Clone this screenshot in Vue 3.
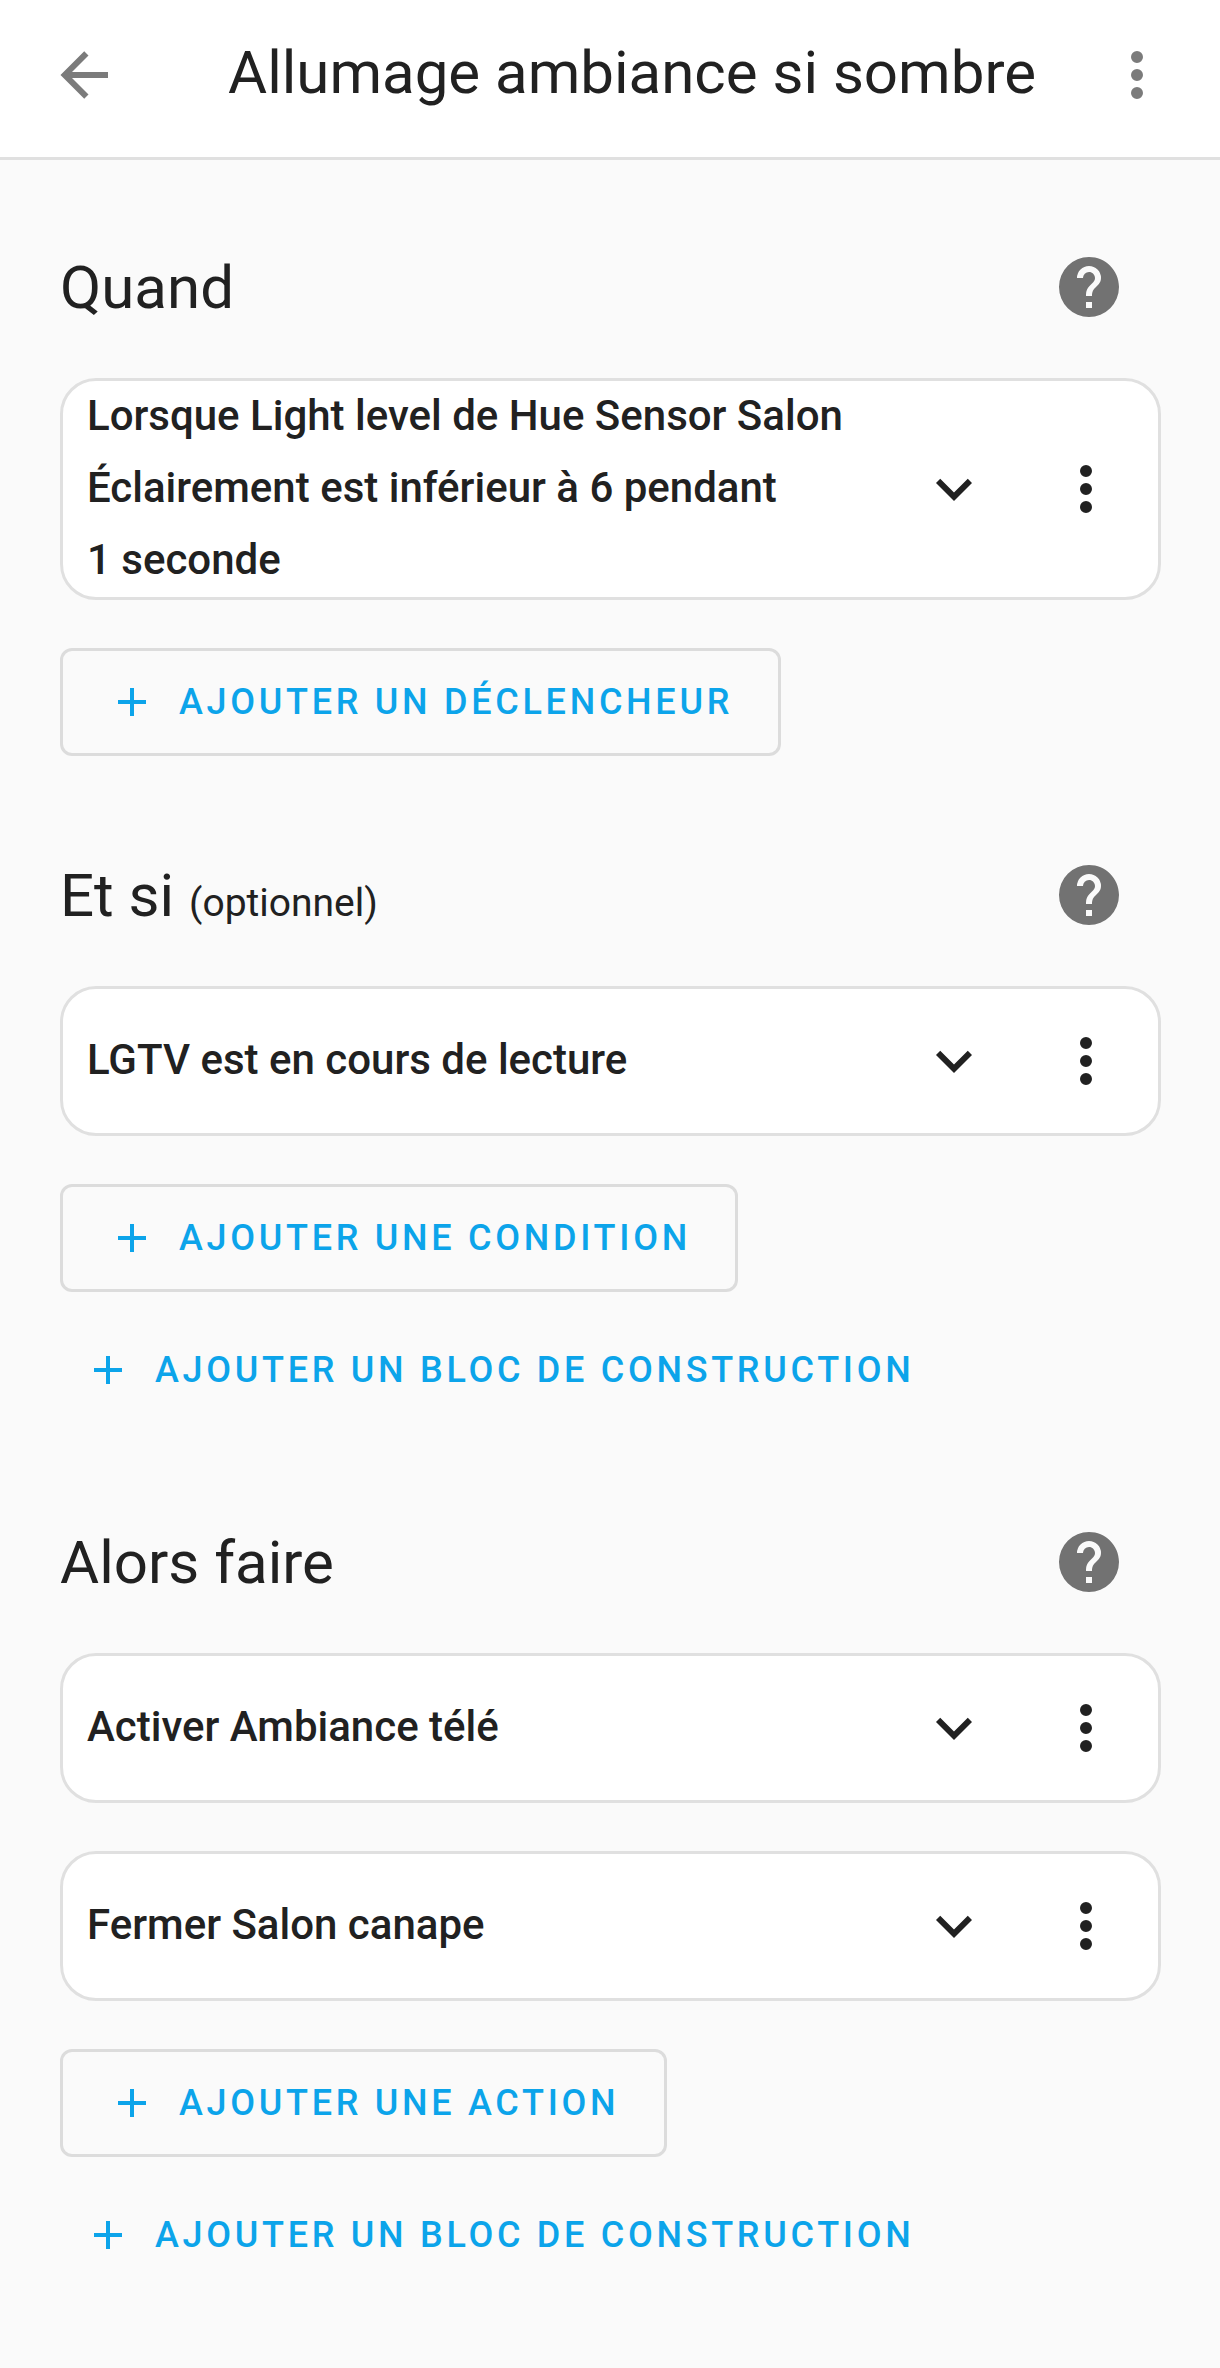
<script setup>
const icons = {
  arrowLeft: 'M20,11V13H8L13.5,18.5L12.08,19.92L4.16,12L12.08,4.08L13.5,5.5L8,11H20Z',
  dots: 'M12,16A2,2 0 0,1 14,18A2,2 0 0,1 12,20A2,2 0 0,1 10,18A2,2 0 0,1 12,16M12,10A2,2 0 0,1 14,12A2,2 0 0,1 12,14A2,2 0 0,1 10,12A2,2 0 0,1 12,10M12,4A2,2 0 0,1 14,6A2,2 0 0,1 12,8A2,2 0 0,1 10,6A2,2 0 0,1 12,4Z',
  chevron: 'M7.41,8.58L12,13.17L16.59,8.58L18,10L12,16L6,10L7.41,8.58Z',
  plus: 'M19,13H13V19H11V13H5V11H11V5H13V11H19V13Z',
  help: 'M15.07,11.25L14.17,12.17C13.45,12.89 13,13.5 13,15H11V14.5C11,13.39 11.45,12.39 12.17,11.67L13.41,10.41C13.78,10.05 14,9.55 14,9C14,7.89 13.1,7 12,7A2,2 0 0,0 10,9H8A4,4 0 0,1 12,5A4,4 0 0,1 16,9C16,9.88 15.64,10.67 15.07,11.25M13,19H11V17H13M12,2A10,10 0 0,0 2,12A10,10 0 0,0 12,22A10,10 0 0,0 22,12C22,6.47 17.5,2 12,2Z',
};

const sections = [
  {
    title: 'Quand',
    rows: ['Lorsque Light level de Hue Sensor Salon Éclairement est inférieur à 6 pendant 1\u00a0seconde'],
    add: 'Ajouter un déclencheur',
  },
  {
    title: 'Et si',
    hint: '(optionnel)',
    rows: ['LGTV est en cours de lecture'],
    add: 'Ajouter une condition',
    block: 'Ajouter un bloc de construction',
  },
  {
    title: 'Alors faire',
    rows: ['Activer Ambiance télé', 'Fermer Salon canape'],
    add: 'Ajouter une action',
    block: 'Ajouter un bloc de construction',
  },
];
</script>

<template>
  <div class="editor">
    <header class="toolbar">
      <button class="icon-button" aria-label="Retour">
        <svg viewBox="0 0 24 24"><path :d="icons.arrowLeft" /></svg>
      </button>
      <h1 class="toolbar__title">Allumage ambiance si sombre</h1>
      <button class="icon-button" aria-label="Menu">
        <svg viewBox="0 0 24 24"><path :d="icons.dots" /></svg>
      </button>
    </header>

    <main class="content">
      <section v-for="section in sections" :key="section.title" class="section">
        <div class="section__header">
          <h2 class="section__title">
            {{ section.title }}
            <span v-if="section.hint" class="section__hint">{{ section.hint }}</span>
          </h2>
          <button class="icon-button icon-button--help" aria-label="Aide">
            <svg viewBox="0 0 24 24"><path :d="icons.help" /></svg>
          </button>
        </div>

        <div class="rows">
          <article v-for="row in section.rows" :key="row" class="card">
            <h3 class="card__title">{{ row }}</h3>
            <svg class="card__chevron" viewBox="0 0 24 24"><path :d="icons.chevron" /></svg>
            <button class="icon-button icon-button--dark" aria-label="Menu">
              <svg viewBox="0 0 24 24"><path :d="icons.dots" /></svg>
            </button>
          </article>
        </div>

        <div class="actions">
          <button class="button button--outlined">
            <svg viewBox="0 0 24 24"><path :d="icons.plus" /></svg>
            <span>{{ section.add }}</span>
          </button>
          <button v-if="section.block" class="button">
            <svg viewBox="0 0 24 24"><path :d="icons.plus" /></svg>
            <span>{{ section.block }}</span>
          </button>
        </div>
      </section>
    </main>
  </div>
</template>

<style>
body {
  margin: 0;
  background: #fafafa;
}
</style>

<style scoped>
.editor {
  box-sizing: border-box;
  min-height: 2368px;
  background: #fafafa;
  color: #212121;
  font-family: Roboto, 'Liberation Sans', sans-serif;
}

h1,
h2,
h3 {
  margin: 0;
  font-weight: 400;
}

button {
  margin: 0;
  padding: 0;
  border: 0;
  background: none;
  font-family: inherit;
}

svg {
  display: block;
  flex: none;
  fill: currentColor;
}

.toolbar {
  display: flex;
  align-items: center;
  box-sizing: border-box;
  height: 160px;
  padding: 0 11px 7px 12px;
  border-bottom: 3px solid #e0e0e0;
  background: #fff;
}

.toolbar__title {
  flex: 1;
  padding: 0 0 4px 72px;
  font-size: 60px;
  line-height: 72px;
  white-space: nowrap;
}

.icon-button {
  display: flex;
  align-items: center;
  justify-content: center;
  flex: none;
  width: 144px;
  height: 144px;
  color: #7b7b7b;
}

.icon-button svg {
  width: 72px;
  height: 72px;
}

.icon-button--help {
  color: #727272;
}

.icon-button--dark {
  color: #212121;
}

.content {
  display: flex;
  flex-direction: column;
  gap: 66.5px;
  padding: 55px 59px 0 60px;
}

.section__header {
  display: flex;
  align-items: center;
  justify-content: space-between;
  margin-bottom: 19px;
}

.section__title {
  padding-top: 2px;
  font-size: 60px;
  line-height: 84px;
}

.section__hint {
  font-size: 39px;
  line-height: 1;
}

.rows {
  display: flex;
  flex-direction: column;
  gap: 48px;
}

.card {
  display: flex;
  align-items: center;
  border: 3px solid #e0e0e0;
  border-radius: 36px;
  background: #fff;
}

.card__title {
  flex: 1;
  margin: -1px 0 1px;
  padding: 0 48px 0 24px;
  font-size: 42px;
  font-weight: 500;
  line-height: 72px;
}

.card__chevron {
  width: 72px;
  height: 72px;
  margin-right: 24px;
}

.actions {
  display: flex;
  flex-direction: column;
  align-items: flex-start;
  gap: 24px;
  margin-top: 48px;
}

.button {
  display: flex;
  align-items: center;
  gap: 23.5px;
  box-sizing: border-box;
  height: 108px;
  padding: 0 23.5px;
  border-radius: 12px;
  color: #0ca4ea;
  font-size: 36px;
  font-weight: 500;
  letter-spacing: 3.71px;
  text-transform: uppercase;
  white-space: nowrap;
}

.button svg {
  width: 48px;
  height: 48px;
}

.button--outlined {
  padding: 0 44.5px;
  border: 3px solid #dcdcdc;
}
</style>
